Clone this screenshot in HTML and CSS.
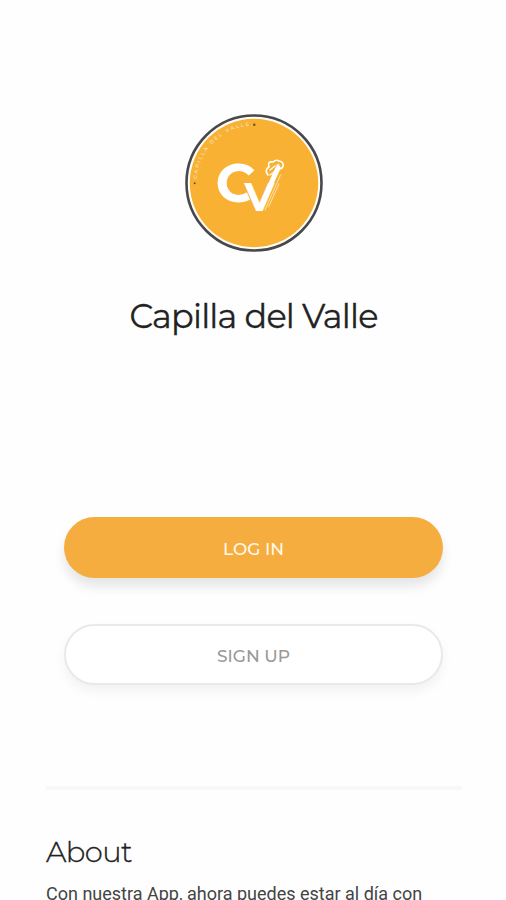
FILE: index.html
```
<!DOCTYPE html>
<html lang="es">
<head>
  <meta charset="UTF-8">
  <title>Capilla del Valle</title>
  <link rel="stylesheet" href="styles.css">
</head>
<body>

  <!-- Logo and name -->
  <header class="header">
    <svg class="logo" viewBox="0 0 140 140">
      <circle cx="70" cy="70" r="67.5" fill="#fffdf5" stroke="#46484d" stroke-width="2.6"/>
      <circle cx="70" cy="70" r="64.2" fill="#f8b133"/>
      <path id="arc" d="M12.8 66 A57.500 57.500 0 0 1 66 12.800" fill="none"/>
      <text class="logo-name"><textPath href="#arc">CAPILLA DEL VALLE</textPath></text>
      <circle cx="10.7" cy="70.3" r="1" fill="#6b5228"/>
      <circle cx="70.3" cy="11.7" r="1.2" fill="#6b5228"/>
      <text class="logo-c" x="31.5" y="89">C</text>
      <text class="logo-v" x="60.5" y="98">V</text>
      <!-- scroll and strings -->
      <g fill="none" stroke="#fff" stroke-linecap="round">
        <path d="M84.500 76 L94 55" stroke-width="5"/>
        <path d="M84 62 q-4 -5 1 -8 q-2 -6 4 -5 q3 -3 6 -1 q5 1 4 5 q-1 4 -5 2" stroke-width="1.6"/>
        <path d="M86 57 l5 -4 M86 62 l4 -3 M93 52 h2" stroke-width="1.3"/>
        <path d="M81 97 L96.500 62 M84.500 94 L95 71" stroke-width=".8" opacity=".8"/>
      </g>
    </svg>
    <h1>Capilla del Valle</h1>
  </header>

  <div class="buttons">
    <button class="login">LOG IN</button>
    <button class="signup">SIGN UP</button>
  </div>

  <!-- About Section -->
  <div class="about">
    <h2>About</h2>
    <p>Con nuestra App, ahora puedes estar al día con</p>
  </div>

</body>
</html>
```
FILE: styles.css
```
body {
  font-family: Montserrat, Inter, sans-serif;
  margin: 0;
  height: 900px;
  overflow: hidden;
  background: #fefefe;
}

.header {
  padding: 113px 0 0 1px;
  text-align: center;
}

.logo {
  display: block;
  width: 140px;
  height: 140px;
  margin: 0 auto;
}

.logo text {
  fill: #fff;
}

.logo-name {
  font-size: 5px;
  font-weight: 500;
  letter-spacing: 1.85px;
  opacity: 0.7;
}

.logo-c {
  font-size: 55px;
  font-weight: 700;
}

.logo-v {
  font-size: 40px;
  font-weight: 700;
  paint-order: stroke;
  stroke: #f8b133;
  stroke-width: 2px;
}

h1 {
  margin: 43px 0 0;
  font-size: 33.5px;
  font-weight: 400;
  line-height: 40px;
  letter-spacing: -0.8px;
  color: #222;
  -webkit-text-stroke: 0.3px #222;
}

.buttons {
  display: flex;
  flex-direction: column;
  gap: 46px;
  margin: 181px 63px 0 64px;
}

button {
  box-sizing: border-box;
  height: 61px;
  padding: 2px 0 0;
  border: none;
  border-radius: 31px;
  font-family: inherit;
  font-size: 17px;
  font-weight: 500;
}

.login {
  background: #f6ad3f;
  color: #fff8ec;
  box-shadow: 0 8px 12px rgba(0, 0, 0, 0.1);
}

.signup {
  border: 2px solid #e9e9e9;
  background: #fff;
  color: #999;
  box-shadow: 0 6px 12px rgba(0, 0, 0, 0.05);
}

/* About */
.about {
  margin: 101px 44px 0 46px;
  border-top: 4px solid #f8f8f8;
}

h2 {
  margin: 44px 0 0;
  font-size: 29px;
  font-weight: 300;
  line-height: 36px;
  letter-spacing: -0.6px;
  color: #222;
  -webkit-text-stroke: 0.3px #222;
}

p {
  margin: 12px 0 0;
  font-family: Roboto, sans-serif;
  font-size: 18px;
  line-height: 24px;
  white-space: nowrap;
  color: #444;
}
```
